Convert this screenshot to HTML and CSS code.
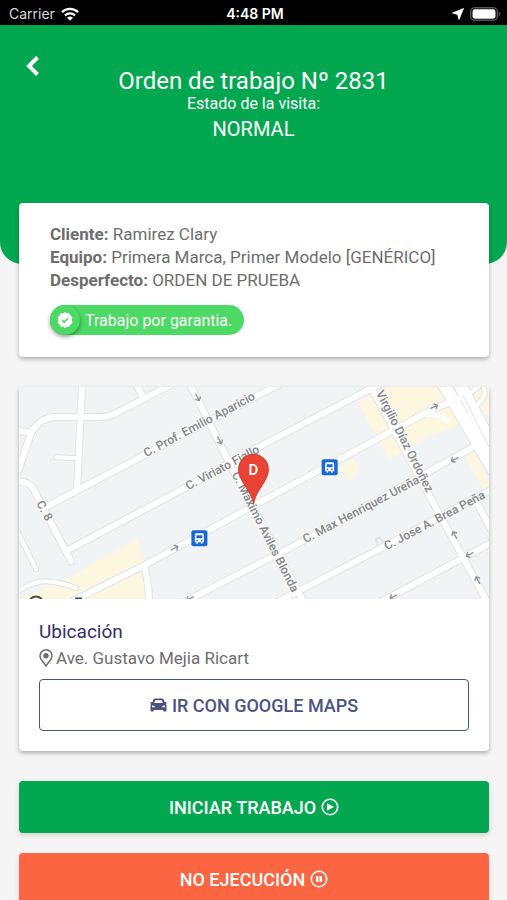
FILE: index.html
```
<!DOCTYPE html>
<html lang="es">

<head>
    <meta charset="UTF-8">
    <meta name="viewport" content="width=device-width, initial-scale=1.0">
    <title>Orden de trabajo</title>
    <link rel="stylesheet" href="styles.css">
</head>

<body>
    <div class="status-bar">
        <div class="status-left">
            <span>Carrier</span>
            <svg width="18" height="14" viewBox="0 0 18 14" fill="none" stroke="#fff" stroke-width="2.3">
                <path d="M1 5.2a11.5 11.5 0 0 1 16 0" />
                <path d="M4 8.4a7.2 7.2 0 0 1 10 0" />
                <path d="M9 13.8L6 10.8a4.4 4.4 0 0 1 6 0z" fill="#fff" stroke="none" />
            </svg>
        </div>
        <span class="clock">4:48 PM</span>
        <div class="status-right">
            <svg width="12" height="12" viewBox="0 0 12 12">
                <path d="M11.5 0.5L7 11.5L5.600 6.400L0.500 5z" fill="#fff" stroke="#fff" stroke-width="0.800" stroke-linejoin="round" />
            </svg>
            <svg width="31" height="14" viewBox="0 0 31 14">
                <rect x="0.7" y="0.7" width="26.6" height="12.6" rx="4" fill="none" stroke="#555" stroke-width="1.4" />
                <rect x="2.5" y="2.3" width="23" height="9.4" rx="2.4" fill="#fff" />
                <path d="M28.7 4.5c2 .8 2 4.2 0 5z" fill="#555" />
            </svg>
        </div>
    </div>

    <header class="header">
        <button class="back-btn" aria-label="Volver">
            <svg width="16" height="22" viewBox="0 0 16 22">
                <path d="M12.5 2.5L4 11l8.5 8.5" fill="none" stroke="#fff" stroke-width="4" />
            </svg>
        </button>
        <h1>Orden de trabajo Nº 2831</h1>
        <p class="visit-label">Estado de la visita:</p>
        <p class="visit-state">NORMAL</p>
    </header>

    <main class="content">
        <section class="card info">
            <p><b>Cliente:</b> Ramirez Clary</p>
            <p><b>Equipo:</b> Primera Marca, Primer Modelo [GENÉRICO]</p>
            <p><b>Desperfecto:</b> ORDEN DE PRUEBA</p>
            <div class="chip">
                <span class="chip-icon">
                    <svg width="16" height="16" viewBox="0 0 16 16">
                        <path d="M8 .5l1.9 1.3 2.3-.1.8 2.1 1.9 1.3L14.3 8l.6 2.900-1.900 1.300-.8 2.100-2.300-.1L8 15.500l-1.900-1.300-2.300.1-.8-2.100-1.900-1.300L1.700 8l-.6-2.900L3 3.800l.8-2.100 2.300.1z" fill="#fff" stroke="#fff" stroke-linejoin="round" />
                        <path d="M5 8.2l2.1 2 3.9-4" fill="none" stroke="#4cd964" stroke-width="1.6" />
                    </svg>
                </span>
                <span>Trabajo por garantia.</span>
            </div>
        </section>

        <section class="card location">
            <svg class="map" viewBox="0 0 469 212" role="img" aria-label="Mapa">
                <defs>
                    <g id="roads">
                        <path d="M63 -4L58 101" />
                        <path d="M151 -2L93 28Q88 30 80 30H36Q24 30 14 42Q10 50 0 82" />
                        <path d="M117 -3l6 12" />
                        <path d="M-3 44l12 1" />
                        <path d="M28 119L262 -4" />
                        <path d="M-3 94Q9 94 14 101L52 174" />
                        <path d="M50 162L167 100L233 63L362 -4" />
                        <path d="M53 214L123 179L233 119L413 22L438 12" />
                        <path d="M164 215L283 154L453 60" />
                        <path d="M257 215L363 160L472 102" />
                        <path d="M360 215L446 169L472 155" />
                        <path d="M349 -4L406 102L468 216" />
                        <path d="M170 -4L213 82L233 119L285 216" />
                        <path d="M455 112l17 32" />
                        <path d="M125 180Q129 193 130 214" />
                    </g>
                    <g id="lanes">
                        <path d="M37 70l21 1" />
                        <path d="M-2 143l19 39" />
                        <path d="M-3 205Q15 193 29 194Q45 195 57 201" />
                        <path d="M440 -3L451 15M445 10l16 -12M452 19l7 -2l6 -10l-1 -8" />
                    </g>
                    <g id="avenue">
                        <path d="M422 -6L473 82" />
                        <path d="M438 -6L473 60" />
                    </g>
                    <path id="arrow" d="M-4 0H4M1 -3L4 0L1 3" />
                    <g id="bus">
                        <rect x="-8" y="-8" width="16" height="16" rx="2" fill="#1967d2" />
                        <path d="M-4.5 -3.5Q-4.5 -5 -3 -5H3Q4.5 -5 4.5 -3.5V4H3V5.5H1.5V4H-1.5V5.5H-3V4H-4.5z" fill="#fff" />
                        <path d="M-3 -3H3V0H-3zM-3 1.5h1.5v1.5h-1.5zM1.5 1.5h1.5v1.5h-1.5z" fill="#1967d2" />
                    </g>
                </defs>
                <rect width="469" height="212" fill="#f1f3f4" />
                <g fill="#fef7e0">
                    <path d="M0 212L50 190L98 163L117 151L123 168L128 212z" />
                    <path d="M338 14L366 0H469V26L400 53L371 71L366 67z" />
                    <path d="M321 80l11 -9l8 11l-11 12z" />
                    <path d="M446 70l8 -6l15 30v12l-4 -1z" />
                </g>
                <g fill="none" stroke="#e0e2e6" stroke-linecap="round">
                    <use href="#roads" stroke-width="8" />
                    <use href="#lanes" stroke-width="6" />
                    <use href="#avenue" stroke-width="14" />
                    <path d="M358 159l-2 -7l4 -2l4 6" stroke-width="2" />
                </g>
                <g fill="none" stroke="#fff" stroke-linecap="round">
                    <use href="#roads" stroke-width="6" />
                    <use href="#lanes" stroke-width="4" />
                    <use href="#avenue" stroke-width="12" />
                    <path d="M406 27l7 1l8 1l7 5" stroke-width="5" />
                </g>
                <path d="M443 8L469 60" stroke="#e3e5e8" fill="none" />
                <g fill="none" stroke="#9094a0" stroke-width="1.4">
                    <use href="#arrow" transform="translate(178 10) rotate(62)" />
                    <use href="#arrow" transform="translate(200 53) rotate(62)" />
                    <use href="#arrow" transform="translate(155 161) rotate(-28)" />
                    <use href="#arrow" transform="translate(414 20) rotate(-25)" />
                    <use href="#arrow" transform="translate(435 72) rotate(152)" />
                    <use href="#arrow" transform="translate(435 148) rotate(242)" />
                    <use href="#arrow" transform="translate(450 167) rotate(152)" />
                    <use href="#arrow" transform="translate(458 193) rotate(242)" />
                    <use href="#arrow" transform="translate(374 209) rotate(152)" />
                    <use href="#arrow" transform="translate(171 211) rotate(152)" />
                </g>
                <g class="street">
                    <text transform="translate(127 70) rotate(-28)">C. Prof. Emilio Aparicio</text>
                    <text transform="translate(169 103) rotate(-28)">C. Viriato Fiallo</text>
                    <text transform="translate(17 116) rotate(62)">C. 8</text>
                    <text transform="translate(212 87) rotate(63)">C. Maximo Aviles Blonda</text>
                    <text transform="translate(286 156) rotate(-28)">C. Max Henriquez Ureña</text>
                    <text transform="translate(367 163) rotate(-28)">C. Jose A. Brea Peña</text>
                    <text transform="translate(356 6) rotate(63)">Virgilio Díaz Ordoñez</text>
                </g>
                <circle cx="17" cy="216" r="7" fill="none" stroke="#4d4d4d" stroke-width="2" />
                <path d="M56 210h7v2h-7z" fill="#4d4d4d" />
                <use href="#bus" x="310" y="80" />
                <use href="#bus" x="180" y="151" />
                <path d="M234 117C232 103 219 94 219 82a15 15 0 0 1 30 0C249 94 236 103 234 117z" fill="#ea4335" stroke="#c5362b" stroke-width="0.8" />
                <text class="pin-label" x="234" y="88">D</text>
            </svg>
            <div class="location-body">
                <h2>Ubicación</h2>
                <p class="address">
                    <svg width="14" height="18" viewBox="0 0 14 18">
                        <path d="M7 17C5 13.5 1 10.5 1 6.8a6 6 0 0 1 12 0C13 10.5 9 13.5 7 17z" fill="none" stroke="#6d6d6d" stroke-width="1.5" />
                        <circle cx="7" cy="6.8" r="2.7" fill="#6d6d6d" />
                    </svg>
                    Ave. Gustavo Mejia Ricart
                </p>
                <button class="btn btn-outline">
                    <svg width="17" height="14" viewBox="0 0 17 14">
                        <path fill-rule="evenodd" d="M5 .5h7c.9 0 1.500.4 1.800 1.200L14.600 4H16c.8 0 1 1.200.3 1.500l-.7.3c.6.5.9 1.100.9 1.900V12c0 .8-.2 1.500-1 1.500h-1.200c-.8 0-1.100-.5-1.100-1.300V12H3.800v.2c0 .8-.3 1.300-1.100 1.300H1.500c-.8 0-1-.7-1-1.500V7.700c0-.8.3-1.400.9-1.900L.7 5.500C0 5.200.2 4 1 4h1.400l.8-2.300C3.500.9 4.100.5 5 .5zM5.200 2.300L4.200 5h8.600l-1-2.700zM2 7.500v1.700h2.400c.6-.1.5-.8.1-1.100zM15 7.500v1.700h-2.400c-.6-.1-.5-.8-.1-1.100z" fill="#4a5482" />
                    </svg>
                    IR CON GOOGLE MAPS
                </button>
            </div>
        </section>

        <div class="actions">
            <button class="btn btn-start">
                INICIAR TRABAJO
                <svg width="18" height="18" viewBox="0 0 18 18">
                    <circle cx="9" cy="9" r="7.7" fill="none" stroke="#fff" stroke-width="1.6" />
                    <path d="M6 5.2L13 9l-7 3.8z" fill="#fff" />
                </svg>
            </button>
            <button class="btn btn-cancel">
                NO EJECUCIÓN
                <svg width="18" height="18" viewBox="0 0 18 18">
                    <circle cx="9" cy="9" r="7.7" fill="none" stroke="#fff" stroke-width="1.6" />
                    <path d="M6 6h2.5v6H6zM9.5 6H12v6H9.5z" fill="#fff" />
                </svg>
            </button>
        </div>
    </main>
</body>

</html>
```
FILE: styles.css
```
* {
    box-sizing: border-box;
}

body {
    margin: 0;
    font-family: Roboto, "Liberation Sans", sans-serif;
    font-size: 17px;
    color: #6d6d6d;
    background-color: #f5f5f5;
}

h1,
h2,
p {
    margin: 0;
    font-weight: normal;
}

svg {
    flex-shrink: 0;
}

.status-bar {
    display: grid;
    grid-template-columns: 1fr auto 1fr;
    align-items: center;
    height: 25px;
    padding: 2px 6px 0 9px;
    background-color: #000;
    color: #fff;
    font-family: Inter, Roboto, sans-serif;
    font-size: 14px;
}

.status-left,
.status-right {
    display: flex;
    align-items: center;
    gap: 6px;
}

.status-left {
    color: #d8d8d8;
}

.status-right {
    justify-content: flex-end;
}

.clock {
    font-weight: 600;
}

.header {
    position: relative;
    padding: 43px 20px 120px;
    background-color: #02a750;
    border-radius: 0 0 22px 22px;
    color: #fff;
    text-align: center;
}

.header h1 {
    font-size: 24px;
    line-height: 26px;
}

.visit-label {
    font-size: 16px;
    line-height: 20px;
}

.visit-state {
    font-size: 20px;
    line-height: 30px;
}

.back-btn {
    position: absolute;
    top: 30px;
    left: 25px;
    padding: 0;
    border: none;
    background: none;
    cursor: pointer;
}

.back-btn svg {
    display: block;
}

.content {
    position: relative;
    margin-top: -61px;
    padding: 0 18px 20px 19px;
}

.card {
    margin-bottom: 30px;
    background-color: #fff;
    border-radius: 4px;
    box-shadow: 0 2px 4px rgba(0, 0, 0, 0.3);
    overflow: hidden;
}

.info {
    padding: 20px 31px 22px;
    line-height: 23px;
}

.chip {
    display: inline-flex;
    align-items: center;
    gap: 5px;
    height: 30px;
    margin-top: 13px;
    padding-right: 12px;
    border-radius: 15px;
    background-color: #4cd964;
    color: #fff;
    font-size: 16px;
    vertical-align: top;
}

.chip-icon {
    display: flex;
    align-items: center;
    justify-content: center;
    width: 30px;
    height: 30px;
    border-radius: 50%;
    background-color: #4cd964;
    box-shadow: 0 2px 4px rgba(0, 0, 0, 0.4);
}

.map {
    display: block;
    width: 100%;
    height: auto;
}

.street {
    font-size: 12px;
    font-weight: 500;
    fill: #85878a;
    stroke: #f8f9fa;
    stroke-width: 2px;
    paint-order: stroke;
}

.pin-label {
    font-size: 15px;
    font-weight: 500;
    fill: #fff;
    text-anchor: middle;
}

.location-body {
    padding: 20px;
}

.location-body h2 {
    font-size: 19px;
    line-height: 26px;
    color: #33306a;
}

.address {
    display: flex;
    align-items: center;
    gap: 3px;
    height: 26px;
    margin-bottom: 8px;
}

.btn {
    display: flex;
    align-items: center;
    justify-content: center;
    gap: 5px;
    width: 100%;
    height: 52px;
    border: none;
    border-radius: 4px;
    font-family: inherit;
    font-size: 18px;
    font-weight: 500;
    color: #fff;
    cursor: pointer;
}

.btn-outline {
    border: 1px solid #4a5482;
    background-color: #fff;
    color: #4a5482;
}

.actions {
    display: grid;
    gap: 20px;
}

.btn-start {
    background-color: #02a750;
    box-shadow: 0 2px 5px rgba(0, 0, 0, 0.15);
}

.btn-cancel {
    background-color: #fc6541;
    box-shadow: 0 2px 5px rgba(0, 0, 0, 0.15);
}
```
